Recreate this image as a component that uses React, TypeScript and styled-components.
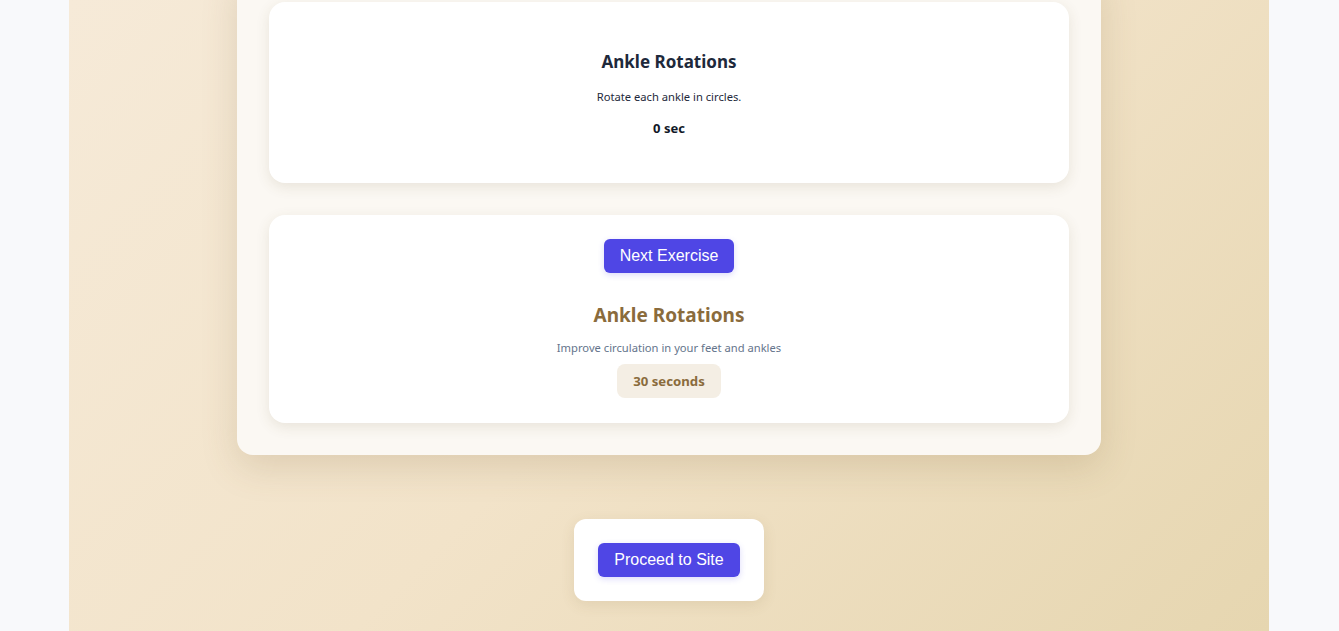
import React from "react";
import styled, { createGlobalStyle } from "styled-components";

const Global = createGlobalStyle`
  html, body { margin: 0; padding: 0; background: #f8f9fb; overflow: hidden; }
  body { font-family: "Noto Sans", "Open Sans", sans-serif; }
`;

const Page = styled.div`
  width: 1200px;
  height: 631px;
  margin-left: calc(50% - 600.5px);
  background: linear-gradient(135deg, #f6ead8 0%, #f2e3c9 50%, #e6d6b0 100%);
  display: flex;
  flex-direction: column;
  align-items: center;
`;

const Panel = styled.section`
  width: 864px;
  box-sizing: border-box;
  margin-top: -30px;
  padding: 32px;
  background: #fbf8f3;
  border-radius: 16px;
  box-shadow: 0 12px 36px rgba(120, 95, 50, 0.18);
  display: flex;
  flex-direction: column;
  gap: 32px;
`;

const Card = styled.div<{ $pad: string }>`
  background: #ffffff;
  border-radius: 16px;
  box-shadow: 0 4px 14px rgba(100, 80, 40, 0.12);
  padding: ${(p) => p.$pad};
  display: flex;
  flex-direction: column;
  align-items: center;
  text-align: center;
`;

const Title = styled.h2<{ $color: string; $size: number; $lh: number; $mt: number }>`
  margin: ${(p) => p.$mt}px 0 0;
  font-size: ${(p) => p.$size}px;
  line-height: ${(p) => p.$lh}px;
  font-weight: 700;
  color: ${(p) => p.$color};
`;

const Desc = styled.p<{ $color: string; $mt: number; $size: number }>`
  margin: ${(p) => p.$mt}px 0 0;
  font-size: ${(p) => p.$size}px;
  line-height: 16px;
  color: ${(p) => p.$color};
`;

const Timer = styled.div`
  margin-top: 14px;
  font-size: 13px;
  line-height: 18px;
  font-weight: 700;
  color: #111827;
`;

const Button = styled.button`
  font-family: "Liberation Sans", Arial, sans-serif;
  font-size: 16px;
  line-height: 18px;
  color: #ffffff;
  background: #4f46e5;
  border: none;
  border-radius: 6px;
  padding: 8px 16px;
  box-shadow: 0 2px 6px rgba(79, 70, 229, 0.2);
  cursor: pointer;
`;

const Pill = styled.div`
  margin-top: 8px;
  padding: 8px 16px;
  background: #f4eee4;
  border-radius: 8px;
  font-size: 13.2px;
  line-height: 18px;
  font-weight: 700;
  color: #8a6b3c;
`;

const ProceedBox = styled.div`
  margin-top: 64px;
  background: #ffffff;
  border-radius: 12px;
  padding: 24px;
  box-shadow: 0 4px 14px rgba(120, 95, 50, 0.12);
`;

export default function App() {
  return (
    <>
      <Global />
      <Page>
        <Panel>
          <Card $pad="48px 24px 46px">
            <Title $color="#1e293b" $size={17} $lh={24} $mt={0}>Ankle Rotations</Title>
            <Desc $color="#1e293b" $mt={15} $size={11.2}>Rotate each ankle in circles.</Desc>
            <Timer>0 sec</Timer>
          </Card>
          <Card $pad="24px 24px 25px">
            <Button>Next Exercise</Button>
            <Title $color="#8a6b3c" $size={19} $lh={28} $mt={28}>Ankle Rotations</Title>
            <Desc $color="#64748b" $mt={11} $size={11.2}>Improve circulation in your feet and ankles</Desc>
            <Pill>30 seconds</Pill>
          </Card>
        </Panel>
        <ProceedBox>
          <Button>Proceed to Site</Button>
        </ProceedBox>
      </Page>
    </>
  );
}
